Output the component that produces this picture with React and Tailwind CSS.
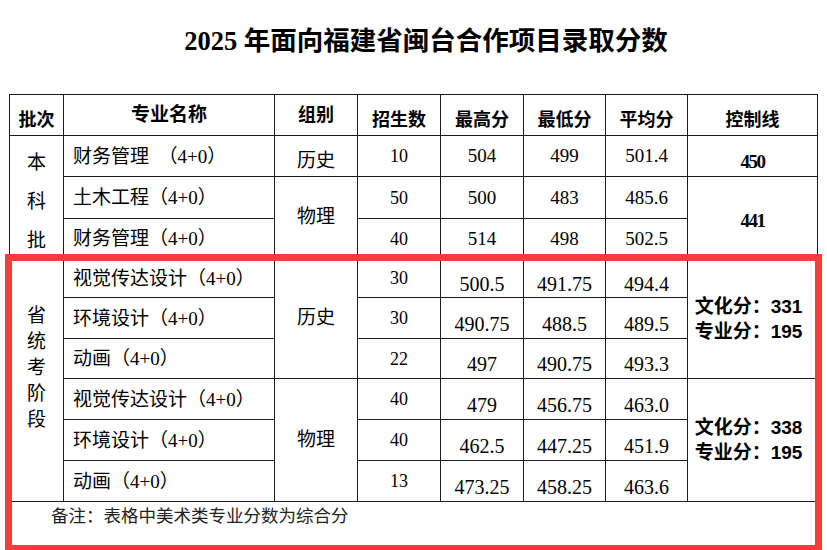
import React from 'react';

const SERIF = "font-['Liberation_Serif','Noto_Sans_CJK_SC',serif]";
const SANS = "font-['Liberation_Sans','Noto_Sans_CJK_SC',sans-serif]";

function Cell({ className = '', children }) {
  return <div className={`bg-white flex items-center ${className}`}>{children}</div>;
}

const benke = [
  { name: '财务管理\u3000（4+0）', n: '10', hi: '504', lo: '499', avg: '501.4' },
  { name: '土木工程（4+0）', n: '50', hi: '500', lo: '483', avg: '485.6' },
  { name: '财务管理（4+0）', n: '40', hi: '514', lo: '498', avg: '502.5' },
];

const shengtong = [
  { name: '视觉传达设计（4+0）', n: '30', hi: '500.5', lo: '491.75', avg: '494.4' },
  { name: '环境设计（4+0）', n: '30', hi: '490.75', lo: '488.5', avg: '489.5' },
  { name: '动画（4+0）', n: '22', hi: '497', lo: '490.75', avg: '493.3' },
  { name: '视觉传达设计（4+0）', n: '40', hi: '479', lo: '456.75', avg: '463.0' },
  { name: '环境设计（4+0）', n: '40', hi: '462.5', lo: '447.25', avg: '451.9' },
  { name: '动画（4+0）', n: '13', hi: '473.25', lo: '458.25', avg: '463.6' },
];

const rowStart = ['row-start-2', 'row-start-3', 'row-start-4', 'row-start-5', 'row-start-6', 'row-start-7', 'row-start-8', 'row-start-9', 'row-start-10'];

export default function App() {
  const rows = [...benke.map((r) => ({ ...r, prov: false })), ...shengtong.map((r) => ({ ...r, prov: true }))];

  return (
    <div className="relative w-[827px] h-[550px] overflow-hidden bg-white text-black">
      {/* title */}
      <div className={`h-[94px] pt-[26px] pl-[25px] text-center text-[26.5px] leading-[30px] font-bold ${SERIF}`}>
        2025 年面向福建省闽台合作项目录取分数
      </div>

      {/* table */}
      <div className="ml-[9px] w-[809px] grid gap-px p-px bg-[#1a1a1a] grid-cols-[53px_210px_82px_82px_82px_81px_81px_129px] grid-rows-[40px_40px_41px_39px_38px_40px_39px_40px_40px_40px_45px]">
        {/* header */}
        <Cell className={`col-start-1 row-start-1 justify-center pt-[10px] text-[18px] font-bold ${SANS}`}>批次</Cell>
        <Cell className={`col-start-2 row-start-1 justify-center text-[19px] font-bold ${SANS}`}>专业名称</Cell>
        <Cell className={`col-start-3 row-start-1 justify-center text-[18px] font-bold ${SANS}`}>组别</Cell>
        <Cell className={`col-start-4 row-start-1 justify-center pt-[10px] text-[18px] font-bold ${SANS}`}>招生数</Cell>
        <Cell className={`col-start-5 row-start-1 justify-center pt-[10px] text-[18px] font-bold ${SANS}`}>最高分</Cell>
        <Cell className={`col-start-6 row-start-1 justify-center pt-[10px] text-[18px] font-bold ${SANS}`}>最低分</Cell>
        <Cell className={`col-start-7 row-start-1 justify-center pt-[10px] text-[18px] font-bold ${SANS}`}>平均分</Cell>
        <Cell className={`col-start-8 row-start-1 justify-center pt-[10px] text-[18px] font-bold ${SANS}`}>控制线</Cell>

        {/* batch column */}
        <Cell className={`col-start-1 row-start-2 row-span-3 flex-col justify-center pt-[8px] text-[19px] leading-[39px] ${SERIF}`}>
          <span>本</span>
          <span>科</span>
          <span>批</span>
        </Cell>
        <Cell className={`col-start-1 row-start-5 row-span-6 flex-col justify-center pb-[25px] text-[19px] leading-[26px] ${SERIF}`}>
          <span>省</span>
          <span>统</span>
          <span>考</span>
          <span>阶</span>
          <span>段</span>
        </Cell>

        {/* group column */}
        <Cell className={`col-start-3 row-start-2 justify-center pt-[10px] text-[19px] ${SERIF}`}>历史</Cell>
        <Cell className={`col-start-3 row-start-3 row-span-2 justify-center text-[19px] ${SERIF}`}>物理</Cell>
        <Cell className={`col-start-3 row-start-5 row-span-3 justify-center text-[19px] ${SERIF}`}>历史</Cell>
        <Cell className={`col-start-3 row-start-8 row-span-3 justify-center text-[19px] ${SERIF}`}>物理</Cell>

        {/* control line column */}
        <Cell className={`col-start-8 row-start-2 justify-center pt-[12px] text-[19px] font-bold tracking-[-1.5px] ${SERIF}`}>450</Cell>
        <Cell className={`col-start-8 row-start-3 row-span-2 justify-center pt-[8px] text-[19px] font-bold tracking-[-1.5px] ${SERIF}`}>441</Cell>
        <Cell className={`col-start-8 row-start-5 row-span-3 justify-center text-[19px] leading-[25px] font-bold ${SANS}`}>
          <div className="pr-[8px]">
            <div>文化分：331</div>
            <div>专业分：195</div>
          </div>
        </Cell>
        <Cell className={`col-start-8 row-start-8 row-span-3 justify-center text-[19px] leading-[25px] font-bold ${SANS}`}>
          <div className="pr-[8px]">
            <div>文化分：338</div>
            <div>专业分：195</div>
          </div>
        </Cell>

        {/* data rows */}
        {rows.map((r, i) => (
          <React.Fragment key={i}>
            <Cell className={`col-start-2 ${rowStart[i]} pl-[9px] pt-[2px] text-[19px] ${SERIF}`}>{r.name}</Cell>
            <Cell className={`col-start-4 ${rowStart[i]} justify-center pt-[1px] text-[18px] ${SERIF}`}>{r.n}</Cell>
            <Cell className={`col-start-5 ${rowStart[i]} justify-center ${r.prov ? 'pt-[11px] text-[20px]' : 'pt-[1px] text-[19px]'} ${SERIF}`}>{r.hi}</Cell>
            <Cell className={`col-start-6 ${rowStart[i]} justify-center ${r.prov ? 'pt-[11px] text-[20px]' : 'pt-[1px] text-[19px]'} ${SERIF}`}>{r.lo}</Cell>
            <Cell className={`col-start-7 ${rowStart[i]} justify-center ${r.prov ? 'pt-[11px] text-[20px]' : 'pt-[1px] text-[19px]'} ${SERIF}`}>{r.avg}</Cell>
          </React.Fragment>
        ))}

        {/* note */}
        <Cell className={`col-start-1 col-span-8 row-start-11 items-start pl-[41px] pt-[1px] text-[17.5px] leading-[26px] text-[#222] ${SERIF}`}>
          备注：表格中美术类专业分数为综合分
        </Cell>
      </div>

      {/* red highlight box */}
      <div className="absolute left-[5px] top-[254px] w-[817px] h-[298px] border-[7px] border-[#fa3b3b] pointer-events-none" />
    </div>
  );
}
